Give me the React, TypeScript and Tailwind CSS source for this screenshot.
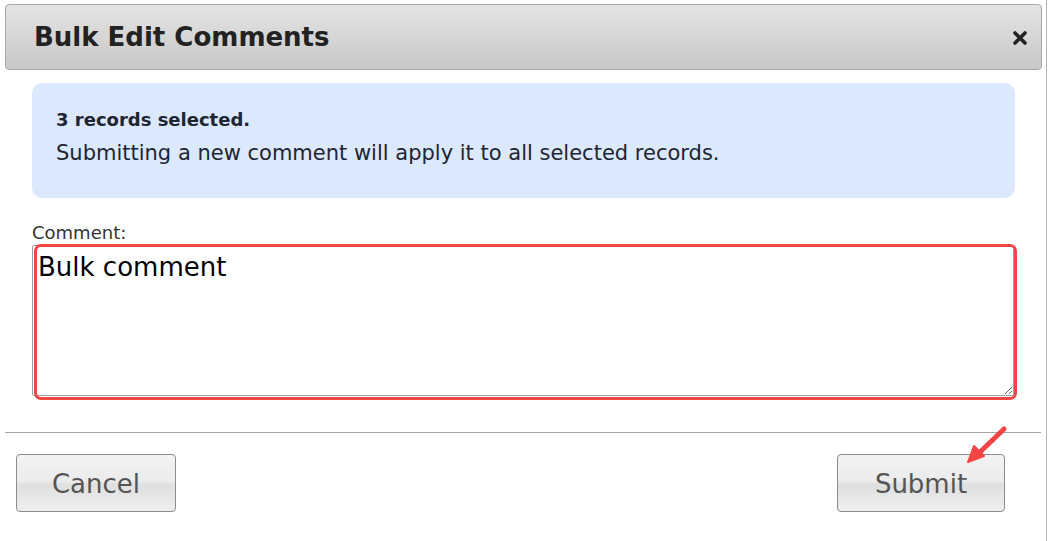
import React from "react";

export default function App() {
  return (
    <div
      className="relative w-[1047px] h-[541px] bg-white border-r border-[#b4b4b4] overflow-hidden"
      style={{ fontFamily: '"DejaVu Sans", Verdana, sans-serif' }}
    >
      <div className="pt-[4px] px-[5px]">
        <div className="h-[66px] w-[1037px] rounded-[4px] border border-[#a8a8a8] bg-[linear-gradient(to_bottom,#e4e4e4,#c8c8c8)] flex items-center justify-between pl-[28px] pr-[14px]">
          <h1 className="text-[26px] leading-[30px] font-bold text-[#222]">Bulk Edit Comments</h1>
          <svg width="14" height="14" viewBox="0 0 14 14" className="mt-[2px]">
            <path d="M2 2 L12 12 M12 2 L2 12" stroke="#222" strokeWidth="3.6" strokeLinecap="round" />
          </svg>
        </div>
      </div>

      <div className="pl-[32px] pr-[31px]">
        <div className="mt-[13px] h-[115px] rounded-[10px] bg-[#dbe8fd] pl-[24px] pt-[25px]">
          <div className="text-[18px] leading-[24px] font-bold text-[#1e2533]">3 records selected.</div>
          <div className="mt-[6px] text-[21px] leading-[30px] text-[#1e2533]">
            Submitting a new comment will apply it to all selected records.
          </div>
        </div>

        <div className="mt-[25px] text-[18px] leading-[20px] text-[#333]">Comment:</div>
        <div className="relative mt-[2px] w-[984px]">
          <textarea
            className="block w-[982px] h-[151px] border border-[#a0a0a0] rounded-[2px] pl-[5px] pt-[6px] text-[26px] leading-[30px] text-black resize-y outline-none"
            style={{ fontFamily: '"DejaVu Sans", Verdana, sans-serif' }}
            defaultValue="Bulk comment"
          />
          <div className="pointer-events-none absolute left-[2px] top-[-1px] w-[983px] h-[156px] border-[3px] border-[#f44545] rounded-[7px]" />
        </div>
      </div>

      <div className="mt-[36px] mx-[5px] h-px bg-[#a8a8a8]" />

      <div className="mt-[21px] flex justify-between pl-[16px] pr-[41px]">
        <button className="w-[160px] h-[58px] rounded-[4px] border border-[#8c8c8c] bg-[linear-gradient(to_bottom,#f3f3f3_0%,#ebebeb_48%,#dfdfdf_52%,#efefef_100%)] text-[26px] leading-[30px] text-[#555] pt-[2px]">
          Cancel
        </button>
        <button className="w-[168px] h-[58px] rounded-[4px] border border-[#8c8c8c] bg-[linear-gradient(to_bottom,#f3f3f3_0%,#ebebeb_48%,#dfdfdf_52%,#efefef_100%)] text-[26px] leading-[30px] text-[#555] pt-[2px]">
          Submit
        </button>
      </div>

      <svg
        className="absolute left-[960px] top-[420px] pointer-events-none"
        width="50"
        height="50"
        viewBox="0 0 50 50"
      >
        <path d="M44 9 L17 35" stroke="#f44545" strokeWidth="5" strokeLinecap="round" />
        <path d="M8 42 L14 26 L24 36 Z" fill="#f44545" stroke="#f44545" strokeWidth="2" strokeLinejoin="round" />
      </svg>
    </div>
  );
}
